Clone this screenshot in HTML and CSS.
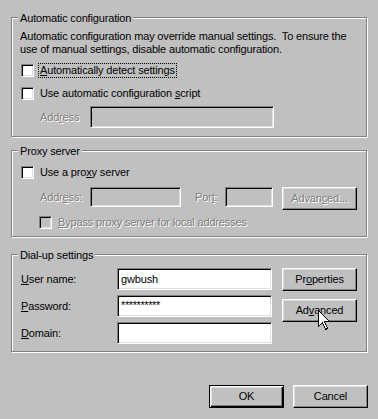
FILE: index.html
```html
<!DOCTYPE html>
<html>
<head>
<meta charset="utf-8">
<link rel="stylesheet" href="styles.css">
</head>
<body>
<div class="dialog">
  <div class="group g1">
    <div class="legend">Automatic configuration</div>
    <p class="desc">Automatic configuration may override manual settings.&nbsp; To ensure the<br>use of manual settings, disable automatic configuration.</p>
    <div class="row cbrow r1">
      <span class="check"></span>
      <span class="cblabel focus"><u>A</u>utomatically detect settings</span>
    </div>
    <div class="row cbrow r2">
      <span class="check"></span>
      <span class="cblabel">Use automatic configuration <u>s</u>cript</span>
    </div>
    <div class="row addr1">
      <span class="lbl dis w50">Add<u>r</u>ess</span>
      <span class="edit dis-edit w184 h22"></span>
    </div>
  </div>

  <div class="group g2">
    <div class="legend">Proxy server</div>
    <div class="row cbrow r3">
      <span class="check"></span>
      <span class="cblabel">Use a pro<u>x</u>y server</span>
    </div>
    <div class="row addr2">
      <span class="lbl dis w50 lh20">Addr<u>e</u>ss:</span>
      <span class="edit dis-edit w91 h20"></span>
      <span class="lbl dis w30 lh20 port">Por<u>t</u>:</span>
      <span class="edit dis-edit w48 h20"></span>
      <span class="btn dis adv1">Advan<u>c</u>ed...</span>
    </div>
    <div class="row cbrow r4">
      <span class="check dis-check"></span>
      <span class="cblabel dis"><u>B</u>ypass proxy server for local addresses</span>
    </div>
  </div>

  <div class="group g3">
    <div class="legend">Dial-up settings</div>
    <div class="dial">
      <div class="fields">
        <div class="field">
          <span class="lbl w96 lh22"><u>U</u>ser name:</span>
          <span class="edit w155 h22 val">gwbush</span>
        </div>
        <div class="field">
          <span class="lbl w96 lh22"><u>P</u>assword:</span>
          <span class="edit w155 h22 val pw">**********</span>
        </div>
        <div class="field">
          <span class="lbl w96 lh22"><u>D</u>omain:</span>
          <span class="edit w155 h22"></span>
        </div>
      </div>
      <div class="btncol">
        <span class="btn">Pr<u>o</u>perties</span>
        <span class="btn">Ad<u>v</u>anced</span>
      </div>
    </div>
  </div>

  <div class="footer">
    <span class="btn default">OK</span>
    <span class="btn cancel">Cancel</span>
  </div>
</div>
<svg class="cursor" width="13" height="21" viewBox="0 0 13 21">
  <path d="M0.5 0.5 L0.5 16.5 L4.5 12.5 L7.5 19.5 L9.5 18.5 L6.5 11.5 L11.5 11.5 Z" fill="#fff" stroke="#000" stroke-width="1" shape-rendering="crispEdges"/>
</svg>
</body>
</html>
```
FILE: styles.css
```css
html, body {
  margin: 0;
  padding: 0;
}
body {
  width: 378px;
  height: 419px;
  background: #c0c0c0;
  font-family: "Liberation Sans", Arial, sans-serif;
  font-size: 11px;
  line-height: 13px;
  letter-spacing: -0.16px;
  color: #000;
  position: relative;
  overflow: hidden;
}
u { text-decoration: underline; text-underline-offset: 1px; }

.dialog {
  padding: 17px 0 0 11px;
}

.group {
  box-sizing: border-box;
  width: 356px;
  border: 1px solid #808080;
  box-shadow: inset 1px 1px 0 #fff, 1px 1px 0 #fff;
  padding: 0 8px;
}
.g1 { height: 120px; }
.g2 { height: 87px; margin-top: 13px; }
.g3 { height: 98px; margin-top: 17px; }

.legend {
  width: fit-content;
  margin: -6px 0 0 -2px;
  padding: 0 2px;
  background: #c0c0c0;
  line-height: 13px;
  height: 13px;
}

.desc {
  margin: 5px 0 0 0;
  white-space: nowrap;
}

.row {
  display: flex;
  align-items: flex-start;
}
.cbrow {
  height: 15px;
  align-items: center;
}
.r1 { margin-top: 7px; }
.r2 { margin-top: 8px; }
.addr1 { margin-top: 5px; }
.r3 { margin-top: 7px; }
.addr2 { margin-top: 7px; }
.r4 { margin-top: 5px; padding-left: 18px; }

.check {
  box-sizing: border-box;
  width: 13px;
  height: 13px;
  margin-left: 1px;
  background: #fff;
  border: 1px solid;
  border-color: #808080 #fff #fff #808080;
  box-shadow: inset 1px 1px 0 #000, inset -1px -1px 0 #dfdfdf;
  flex: none;
}
.dis-check { background: #c0c0c0; }

.cblabel {
  margin-left: 4px;
  padding: 0 1px;
  border: 1px solid transparent;
  line-height: 13px;
  white-space: nowrap;
}
.focus { border: 1px dotted #000; }

.dis {
  color: #808080;
  text-shadow: 1px 1px 0 #fff;
}

.lbl {
  white-space: nowrap;
  flex: none;
}
.addr1 .lbl { margin-left: 20px; line-height: 22px; }
.addr2 .lbl:first-child { margin-left: 20px; }
.w50 { width: 50px; }
.w30 { width: 30px; }
.w96 { width: 96px; }
.lh20 { line-height: 20px; }
.lh22 { line-height: 22px; }
.port { margin-left: 14px; }

.edit {
  box-sizing: border-box;
  display: block;
  flex: none;
  background: #fff;
  border: 1px solid;
  border-color: #808080 #fff #fff #808080;
  box-shadow: inset 1px 1px 0 #000, inset -1px -1px 0 #dfdfdf;
  padding: 0 3px;
  white-space: nowrap;
}
.dis-edit { background: #c0c0c0; }
.w184 { width: 184px; }
.w91 { width: 91px; }
.w48 { width: 48px; }
.w155 { width: 155px; }
.h22 { height: 22px; line-height: 20px; }
.h20 { height: 20px; }
.val { padding-left: 3px; }
.pw { line-height: 13px; padding-top: 3px; letter-spacing: -0.4px; }

.btn {
  box-sizing: border-box;
  display: flex;
  align-items: center;
  justify-content: center;
  width: 75px;
  height: 23px;
  border: 1px solid;
  border-color: #fff #000 #000 #fff;
  box-shadow: inset -1px -1px 0 #808080, inset 1px 1px 0 #dfdfdf;
  background: #c0c0c0;
  white-space: nowrap;
  flex: none;
}
.adv1 { margin-left: 9px; }

.dial {
  display: flex;
  margin-top: 6px;
  margin-left: 1px;
}
.fields {
  display: flex;
  flex-direction: column;
  gap: 5px;
}
.field {
  display: flex;
}
.btncol {
  display: flex;
  flex-direction: column;
  gap: 8px;
  margin-left: 10px;
}

.footer {
  display: flex;
  justify-content: flex-end;
  gap: 9px;
  margin-top: 33px;
  padding-right: 10px;
}
.default {
  border: 1px solid #000;
  box-shadow: inset 1px 1px 0 #fff, inset -1px -1px 0 #000, inset -2px -2px 0 #808080, inset 2px 2px 0 #dfdfdf;
}
.cancel { width: 75px; }

.cursor {
  position: absolute;
  left: 318px;
  top: 310px;
}
```
